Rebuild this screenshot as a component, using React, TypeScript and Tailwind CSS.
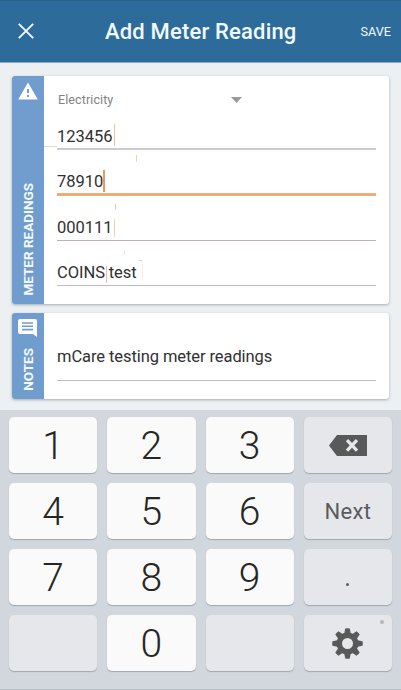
import type { ReactNode } from "react";

function Card({ label, icon, className, children }: { label: string; icon: ReactNode; className: string; children: ReactNode }) {
  return (
    <section className={`flex overflow-hidden rounded-[3px] bg-white shadow-[0_1px_3px_rgba(60,70,80,0.4)] ${className}`}>
      <div className="flex w-[31.5px] shrink-0 flex-col items-center justify-between bg-[#709dce] pb-2">
        {icon}
        <span className="rotate-180 text-[13.5px] leading-4 font-bold whitespace-nowrap text-[#f4f9ff] [writing-mode:vertical-rl]">
          {label}
        </span>
      </div>
      <div className="flex min-w-0 flex-1 flex-col pr-[13.5px] pl-[13.5px]">{children}</div>
    </section>
  );
}

function Caret({ className }: { className: string }) {
  return <span className={`absolute ${className}`} />;
}

function Field({ children, className }: { children: ReactNode; className: string }) {
  return (
    <div className={`relative flex flex-col justify-end text-[16.5px] leading-5 text-[#303030] ${className}`}>
      {children}
    </div>
  );
}

function Key({ children, light = false }: { children?: ReactNode; light?: boolean }) {
  return (
    <div
      className={`flex items-center justify-center rounded-[5px] shadow-[0_1px_1px_rgba(120,125,135,0.55)] ${
        light ? "bg-[#fafafa] pt-[3px] text-[39px] leading-none font-light text-[#262626]" : "bg-[#e6e7eb] text-[#5a5b5d]"
      }`}
    >
      {children}
    </div>
  );
}

const TEETH = [0, 45, 90, 135, 180, 225, 270, 315];

export default function App() {
  return (
    <div className="flex h-[690px] w-[401px] flex-col overflow-hidden bg-[#ecf0f3] font-[Roboto,sans-serif]">
      <header className="flex h-[62.5px] shrink-0 items-center border-t border-b border-t-[#2a6085] border-b-[#86abc7] bg-[#2d6c9a] pr-[10px] pl-[18px] text-[#f3faff]">
        <svg className="h-4 w-4" viewBox="0 0 16 16" fill="none" stroke="currentColor" strokeWidth="1.9">
          <path d="M.8.8 15.2 15.2M15.2.8.8 15.2" />
        </svg>
        <h1 className="mt-[2px] ml-[71px] text-[22px] leading-7 font-medium tracking-[0.18px]">Add Meter Reading</h1>
        <span className="mt-px ml-auto text-[12.7px]">SAVE</span>
      </header>

      <main className="flex flex-1 flex-col px-3 pt-[13.5px]">
        <Card
          label="METER READINGS"
          className="h-[227.5px]"
          icon={
            <svg className="mt-[6px] h-[18px] w-5" viewBox="0 0 20 18">
              <path d="M10 .4 19.8 17.4H.2Z" fill="#fff" />
              <path d="M9 7h2v4H9zM9 13h2v2H9z" fill="#709dce" />
            </svg>
          }
        >
          <div className="flex h-[29px] items-end text-[12.5px] leading-4 text-[#828282]">
            <span className="ml-[1px] w-[173px] translate-y-[3px] tracking-[0.1px]">Electricity</span>
            <svg className="mb-[2px] h-[6px] w-[11px]" viewBox="0 0 11 6">
              <path d="M0 0h11L5.5 6Z" fill="#999" />
            </svg>
          </div>
          <Field className="h-[45px] border-b-2 border-[#cbcbcb] pb-px">
            <span>123456</span>
            <Caret className="top-[19px] left-[57px] h-[22px] w-px bg-[#e5c49e]" />
            <Caret className="top-[41px] -left-[13px] h-px w-[13px] bg-[#f1d8b9]" />
          </Field>
          <Field className="h-[46px] border-b-3 border-[#f0ac77] pb-px">
            <span>78910</span>
            <Caret className="top-[20px] left-[46px] h-[22px] w-[2px] bg-[#ed9a59]" />
            <Caret className="top-[5px] left-[79px] h-[7px] w-px bg-[#ecd5b7]" />
          </Field>
          <Field className="h-[45px] border-b border-[#bcb3b1] pb-[2px]">
            <span>000111</span>
            <Caret className="top-[23px] left-[57px] h-[18px] w-px bg-[#ead0af]" />
            <Caret className="top-[8px] left-[58px] h-[5px] w-px bg-[#e5c49f]" />
          </Field>
          <Field className="h-[45px] border-b border-[#bdbdbd] pb-[2px]">
            <span>COINS<span className="ml-[3.5px]">test</span></span>
            <Caret className="top-[25px] left-[49px] h-[17px] w-px bg-[#f1bd9a]" />
            <Caret className="top-[19px] left-[82px] h-px w-[3px] bg-[#ddd5cc]" />
            <Caret className="top-[20px] left-[85px] h-[20px] w-px bg-[#fbf0e7]" />
            <Caret className="top-[10px] left-[67px] h-[4px] w-px bg-[#eee7df]" />
          </Field>
        </Card>
        <Card
          label="NOTES"
          className="mt-[9.5px] h-[86px]"
          icon={
            <svg className="mt-[6px] h-[18px] w-[19px]" viewBox="0 0 19 18">
              <path d="M2 0h15q2 0 2 2v16l-4-3H2q-2 0-2-2V2Q0 0 2 0Z" fill="#fff" />
              <path d="M4 4h11M4 7.3h11M4 10.6h11" stroke="#709dce" strokeWidth="1.6" />
            </svg>
          }
        >
          <Field className="h-[68px] border-b border-[#bdbdbd] pb-[13px]">
            <span className="tracking-[-0.08px] whitespace-nowrap">mCare testing meter readings</span>
          </Field>
        </Card>
      </main>

      <section className="h-[280.5px] shrink-0 border-b border-[#b8bec6] bg-[#d2d7dd] px-[9px] pt-[7px]">
        <div className="grid auto-rows-[56px] grid-cols-4 gap-x-[10px] gap-y-[10px]">
          <Key light>1</Key>
          <Key light>2</Key>
          <Key light>3</Key>
          <Key>
            <svg className="mt-px h-[21px] w-[38px]" viewBox="0 0 38 21">
              <path d="M8 0h30v21H8L0 10.5Z" fill="#58595b" />
              <path d="m18 5.2 10 10.4M28 5.2 18 15.6" stroke="#e8e9ec" strokeWidth="3.2" />
            </svg>
          </Key>
          <Key light>4</Key>
          <Key light>5</Key>
          <Key light>6</Key>
          <Key>
            <span className="mt-[2px] text-[22px] tracking-[0.3px]">Next</span>
          </Key>
          <Key light>7</Key>
          <Key light>8</Key>
          <Key light>9</Key>
          <Key>
            <span className="mt-4 h-[3px] w-[3px] rounded-full bg-[#5a5b5d]" />
          </Key>
          <Key />
          <Key light>0</Key>
          <Key />
          <Key>
            <span className="relative mt-[2px]">
              <svg className="h-[31px] w-[31px]" viewBox="-15.5 -15.5 31 31" fill="#58595b">
                <circle r="8.2" fill="none" stroke="#58595b" strokeWidth="5.4" />
                {TEETH.map((angle) => (
                  <path key={angle} d="M-3.4-9-2.3-15q2.3-.6 4.6 0L3.4-9Z" transform={`rotate(${angle})`} />
                ))}
              </svg>
              <span className="absolute -top-[8px] -right-[21px] h-1 w-1 rounded-full bg-[#b4b5b9]" />
            </span>
          </Key>
        </div>
      </section>
    </div>
  );
}
